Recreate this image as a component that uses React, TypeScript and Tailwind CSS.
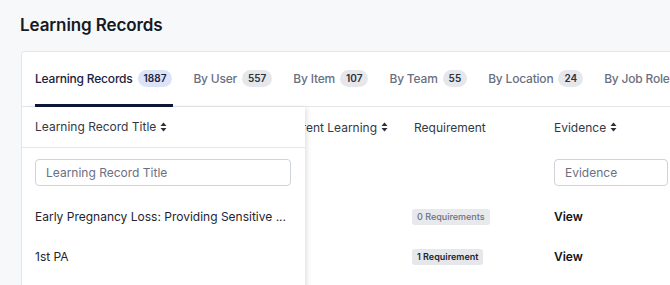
import React from "react";

const SortIcon = () => (
  <svg width="7" height="10" viewBox="0 0 7 10" className="inline-block ml-[4px] mb-[1px]" fill="#2a2f3a">
    <path d="M3.5 0.5 L6.5 4 L0.5 4 Z" />
    <path d="M3.5 9.5 L6.5 6 L0.5 6 Z" />
  </svg>
);

const tabs = [
  { label: "Learning Records", count: "1887", active: true },
  { label: "By User", count: "557" },
  { label: "By Item", count: "107" },
  { label: "By Team", count: "55" },
  { label: "By Location", count: "24" },
  { label: "By Job Role", count: "12" },
];

export default function App() {
  return (
    <div
      className="w-[670px] h-[285px] overflow-hidden bg-[#f7f8fa] text-[#1f2430]"
      style={{ fontFamily: "Inter, 'Noto Sans', sans-serif" }}
    >
      <div className="pl-[20px] pt-[13px] h-[51px]">
        <h1 className="text-[17px] font-semibold leading-[24px] text-[#161a23] tracking-[-0.1px]">Learning Records</h1>
      </div>
      <div className="ml-[21px] w-[700px] bg-white border border-[#e3e6eb] rounded-tl-[3px]">
        {/* Tabs */}
        <div className="flex gap-[21px] pl-[13px] h-[55px] border-b border-[#e5e7eb] whitespace-nowrap">
          {tabs.map((t) => (
            <div key={t.label} className="relative flex items-center h-full pb-[1px]">
              <span
                className={
                  "text-[12px] font-medium tracking-[-0.2px] " + (t.active ? "text-[#1b2240]" : "text-[#6b7080]")
                }
              >
                {t.label}
              </span>
              <span
                className={
                  "ml-[5px] h-[17px] px-[6px] rounded-full text-[10px] font-semibold leading-[17px] " +
                  (t.active ? "bg-[#dce3f6] text-[#1b2240]" : "bg-[#e5e7eb] text-[#2b303b]")
                }
              >
                {t.count}
              </span>
              {t.active && (
                <div className="absolute left-0 right-[-1px] bottom-[-1px] h-[3px] bg-[#0d1738]" />
              )}
            </div>
          ))}
        </div>
        {/* Table */}
        <div className="flex h-[200px]">
          <div className="relative z-10 w-[283px] shrink-0 bg-white shadow-[3px_0_5px_-1px_rgba(0,0,0,0.12)] whitespace-nowrap">
            <div className="h-[41px] flex items-center pl-[13px] border-b border-[#e5e7eb] text-[12px] text-[#333845]">
              Learning Record Title
              <SortIcon />
            </div>
            <div className="h-[49px] flex items-center pl-[13px] pr-[14px]">
              <div className="w-full h-[27px] border border-[#cfd3da] rounded-[4px] flex items-center pl-[10px] text-[12px] text-[#6b7080]">
                Learning Record Title
              </div>
            </div>
            <div className="h-[40px] flex items-center pl-[13px] text-[12px] text-[#1f2430]">
              Early Pregnancy Loss: Providing Sensitive ...
            </div>
            <div className="h-[40px] flex items-center pl-[13px] text-[12px] text-[#1f2430]">
              1st PA
            </div>
          </div>
          <div className="flex-1 overflow-hidden">
            <div className="flex ml-[-38px] whitespace-nowrap">
              <div className="w-[133px] shrink-0 pl-[14px]">
                <div className="h-[41px] flex items-center text-[12px] text-[#333845]">
                  Current Learning
                  <SortIcon />
                </div>
              </div>
              <div className="w-[141px] shrink-0 pl-[12px]">
                <div className="h-[41px] flex items-center pl-[2px] text-[12px] text-[#333845]">Requirement</div>
                <div className="h-[49px]" />
                <div className="h-[40px] flex items-center">
                  <span className="h-[16px] px-[5px] rounded-[3px] bg-[#e8e9ec] text-[9px] font-medium leading-[16px] text-[#6b7080]">
                    0 Requirements
                  </span>
                </div>
                <div className="h-[40px] flex items-center">
                  <span className="h-[16px] px-[5px] rounded-[3px] bg-[#e5e7eb] text-[9px] font-semibold leading-[16px] text-[#1f2430]">
                    1 Requirement
                  </span>
                </div>
              </div>
              <div className="w-[160px] shrink-0 pl-[13px]">
                <div className="h-[41px] flex items-center text-[12px] text-[#333845]">
                  Evidence
                  <SortIcon />
                </div>
                <div className="h-[49px] flex items-center">
                  <div className="w-[114px] h-[27px] border border-[#cfd3da] rounded-[4px] flex items-center pl-[10px] text-[12px] text-[#6b7080]">
                    Evidence
                  </div>
                </div>
                <div className="h-[40px] flex items-center text-[12px] font-semibold text-[#111318]">View</div>
                <div className="h-[40px] flex items-center text-[12px] font-semibold text-[#111318]">View</div>
              </div>
            </div>
          </div>
        </div>
      </div>
    </div>
  );
}
